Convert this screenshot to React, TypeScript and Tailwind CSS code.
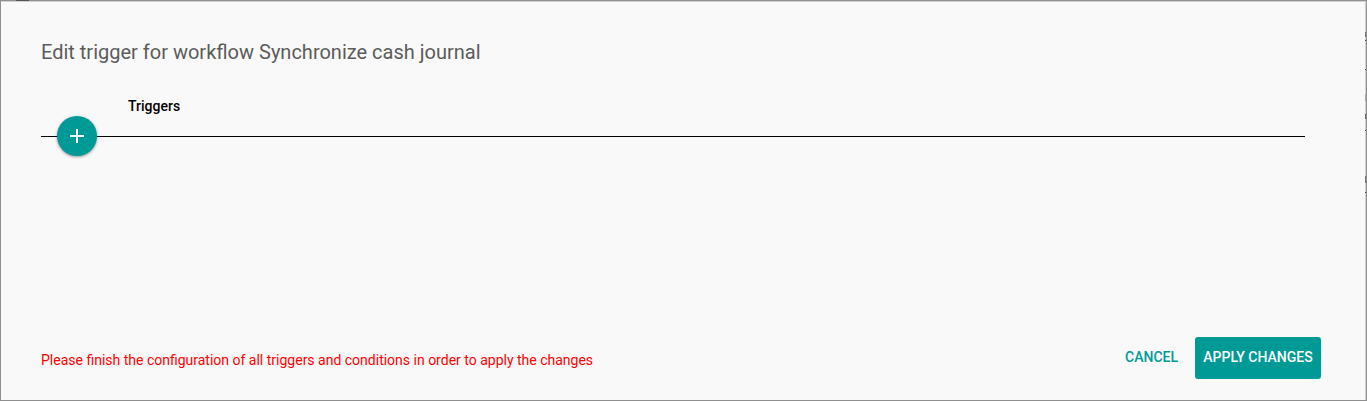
import React from "react";

function AddTriggerButton() {
  return (
    <button
      type="button"
      aria-label="Add trigger"
      className="-my-5 ml-4 flex size-10 shrink-0 items-center justify-center rounded-full bg-[#009a96] text-white shadow-[0_1px_3px_rgba(0,0,0,0.4)]"
    >
      <svg viewBox="0 0 24 24" className="size-6" fill="currentColor" aria-hidden="true">
        <path d="M19 13h-6v6h-2v-6H5v-2h6V5h2v6h6v2z" />
      </svg>
    </button>
  );
}

/* Slivers of the page that stay visible beside the dialog. */
function PageEdge() {
  return (
    <svg
      aria-hidden="true"
      width="1"
      height="200"
      shapeRendering="crispEdges"
      className="absolute top-0 right-0"
    >
      <path d="M0 32h1v5h-1zM0 176h1v7h-1z" fill="#6f7a78" />
      <path d="M0 94h1v7h-1z" fill="#aaaaaa" />
      <path d="M0 114h1v5h-1z" fill="#666666" />
      <path d="M0 40h1v1h-1zM0 69h1v1h-1zM0 130h1v1h-1zM0 192h1v1h-1z" fill="#444444" />
    </svg>
  );
}

export default function App() {
  return (
    <div className="relative flex min-h-screen flex-col border-x border-b border-[#8f8f8f] bg-[#f9f9f9] font-[Roboto,sans-serif] shadow-[inset_-1px_2px_0_#d2d2d2]">
      <div className="flex h-px bg-[#8f8f8f] pl-[15px]">
        <div className="w-[13px] bg-[#555555]" />
      </div>
      <PageEdge />
      <main className="flex-1 pt-[35px] pr-[61px] pl-10">
        <h1 className="text-xl leading-8 text-[#5c5c5c]">
          Edit trigger for workflow Synchronize cash journal
        </h1>
        <section className="pt-[26px]">
          <h2 className="pl-[87px] text-sm leading-6 font-medium text-black">Triggers</h2>
          <div className="mt-[18px] flex h-px items-start bg-black">
            <AddTriggerButton />
          </div>
        </section>
      </main>
      <footer className="flex items-center justify-between pr-[45px] pb-[21px] pl-10">
        <p className="pt-1 text-sm leading-5 text-[#ff0000]">
          Please finish the configuration of all triggers and conditions in order to apply the changes
        </p>
        <div className="flex items-center gap-[9px] text-sm font-medium">
          <button type="button" className="h-[42px] rounded-[3px] px-2 pb-0.5 text-[#009a96]">
            CANCEL
          </button>
          <button
            type="button"
            className="h-[42px] min-w-[126px] rounded-[3px] bg-[#009a96] px-2 pb-0.5 text-white"
          >
            APPLY CHANGES
          </button>
        </div>
      </footer>
    </div>
  );
}
